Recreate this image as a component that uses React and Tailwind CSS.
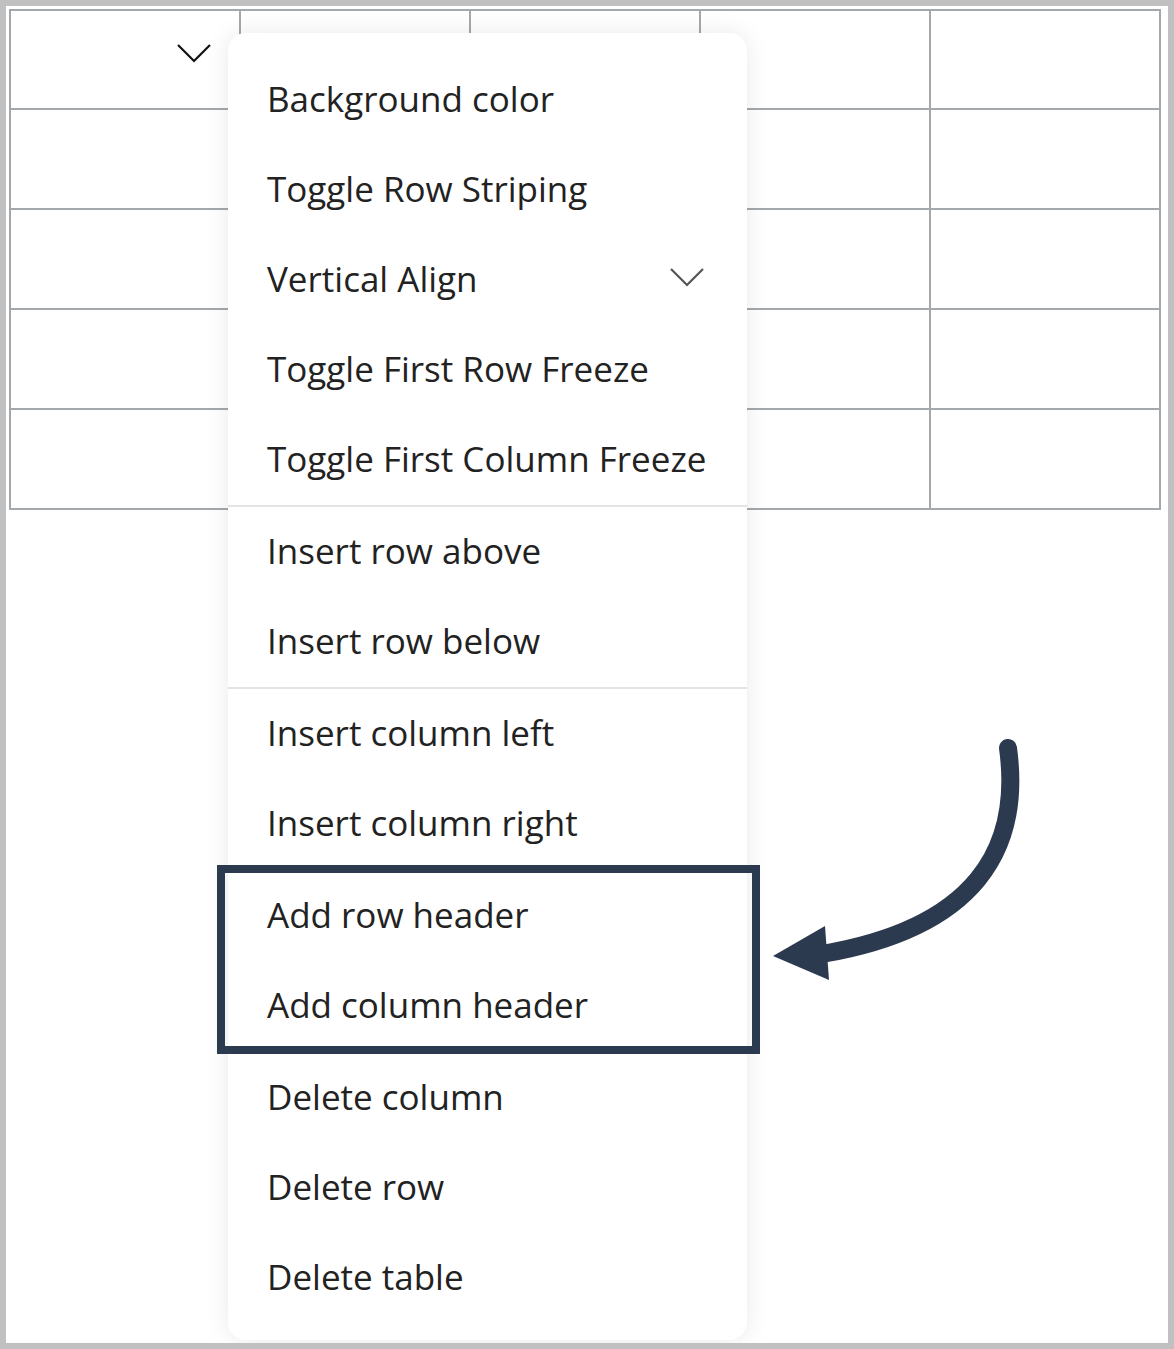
import React from "react";

const sections = [
  [
    "Background color",
    "Toggle Row Striping",
    "Vertical Align",
    "Toggle First Row Freeze",
    "Toggle First Column Freeze",
  ],
  ["Insert row above", "Insert row below"],
  ["Insert column left", "Insert column right"],
  ["Add row header", "Add column header"],
  ["Delete column", "Delete row", "Delete table"],
];

// CHEVRON
function Chevron({ className, color }) {
  return (
    <svg
      width="36"
      height="20"
      viewBox="0 0 36 20"
      className={className}
    >
      <polyline
        points="2,2 18,18 34,2"
        fill="none"
        stroke={color}
        strokeWidth="2.2"
      />
    </svg>
  );
}

function MenuItem({ label }) {
  return (
    <div className="h-[90px] flex items-center justify-between pl-[39px] pr-[42px]">
      <span className="text-[35px] leading-none whitespace-nowrap text-[#222222] mb-[3px]">
        {label}
      </span>

      {label === "Vertical Align" && (
        <Chevron className="mb-[6px] shrink-0" color="#555555" />
      )}
    </div>
  );
}

export default function App() {
  const cells = Array.from({ length: 25 });

  return (
    <div
      className="relative w-[1174px] h-[1349px] border-[6px] border-[#c0c0c0] bg-white overflow-hidden"
      style={{ fontFamily: '"Open Sans", "Noto Sans", sans-serif' }}
    >
      {/* TABLE */}
      <div className="ml-[3px] mt-[3px] w-[1152px] grid grid-cols-5 gap-[2px] p-[2px] bg-[#a3a8ac]">
        {cells.map((_, i) => (
          <div
            key={i}
            className={
              i < 5
                ? "h-[97px] bg-white flex items-start justify-end pt-[32px] pr-[27px]"
                : "h-[98px] bg-white"
            }
          >
            {i === 0 && <Chevron color="#111111" />}
          </div>
        ))}
      </div>

      {/* MENU */}
      <div className="absolute left-[222px] top-[27px] w-[519px] h-[1307px] bg-white rounded-[18px] shadow-[0_0_24px_rgba(0,0,0,0.09)] pt-[22px] pb-[17px] flex flex-col">
        {sections.map((items, s) => (
          <div
            key={s}
            className={
              s > 0
                ? "border-t-2 border-[#e4e4e4]"
                : ""
            }
          >
            {items.map((label) => (
              <MenuItem key={label} label={label} />
            ))}
          </div>
        ))}
      </div>

      {/* HIGHLIGHT */}
      <div className="absolute left-[211px] top-[859px] w-[543px] h-[189px] border-[8px] border-[#2c3a4f]" />

      {/* ARROW */}
      <svg
        className="absolute left-[754px] top-[724px]"
        width="280"
        height="270"
        viewBox="760 730 280 270"
      >
        <path
          d="M1008 748 C1022 850 975 928 822 954"
          fill="none"
          stroke="#2c3a4f"
          strokeWidth="18"
          strokeLinecap="round"
        />
        <polygon
          points="773,956 825,926 829,980"
          fill="#2c3a4f"
        />
      </svg>
    </div>
  );
}
